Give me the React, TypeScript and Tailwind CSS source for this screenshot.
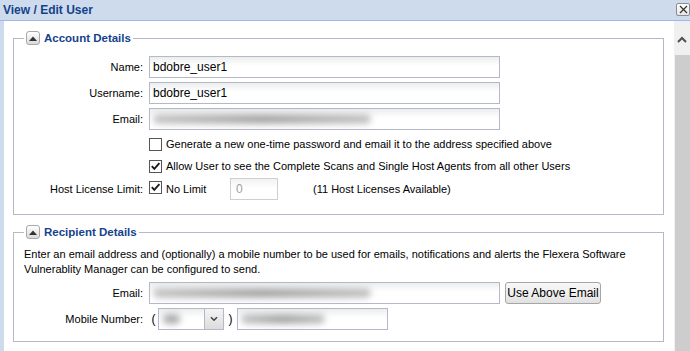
import React from "react";

const boxClass =
  "h-[22px] border border-[#b5b8c8] bg-linear-to-b from-[#eceeee] via-white via-[45%] to-white";

const Checkbox = ({ checked }: { checked?: boolean }) => (
  <span className="inline-flex items-center justify-center w-[13px] h-[13px] border border-[#555] bg-white shrink-0">
    {checked && (
      <svg width="11" height="11" viewBox="0 0 11 11">
        <path d="M1.8 5.2 L4.3 7.8 L9.4 2.2" fill="none" stroke="#1b1b1b" strokeWidth="1.9" />
      </svg>
    )}
  </span>
);

const Legend = ({ title }: { title: string }) => (
  <legend className="px-[2px]">
    <span className="flex items-center gap-[4px]">
      <span className="w-[14px] h-[14px] rounded-[3px] border border-[#a9a9a9] bg-linear-to-b from-white to-[#dadada] flex items-center justify-center">
        <svg width="8" height="5" viewBox="0 0 8 5">
          <path d="M0 5 L4 0.5 L8 5 Z" fill="#333" />
        </svg>
      </span>
      <span className="text-[11.5px] leading-[14px] font-bold text-[#15428b]">{title}</span>
    </span>
  </legend>
);

const Blur = ({ width }: { width: string }) => (
  <span className={`block h-[10px] rounded-full bg-linear-to-r from-[#c6c6c6] via-[#a8a8a8] to-[#c4c4c4] blur-[3px] ${width}`} />
);

const FieldLabel = ({ text }: { text: string }) => (
  <span className="w-[119px] shrink-0 text-right">{text}</span>
);

const App = () => {
  return (
    <div className="w-[690px] h-[351px] overflow-hidden flex flex-col bg-[#cedbec] font-['Liberation_Sans',Arial,sans-serif] text-[11px] text-black">
      <div className="h-[21px] shrink-0 flex justify-between border-b border-[#99bbe8] pl-[3px]">
        <span className="text-[12px] leading-[20px] font-bold text-[#15428b]">View / Edit User</span>
        <span className="mt-[3px] w-[14px] h-[13px] rounded-[2px] border border-[#8c8c8c] bg-linear-to-b from-white to-[#e6e6e6] flex items-center justify-center">
          <svg width="9" height="9" viewBox="0 0 9 9">
            <path d="M1 1 L8 8 M8 1 L1 8" stroke="#333" strokeWidth="1.2" />
          </svg>
        </span>
      </div>

      <div className="flex flex-1 min-h-0 pl-[4px]">
        <div className="flex-1 bg-white pl-[9px] pr-[10px]">
          <fieldset className="mt-[10px] border border-[#b5b8c8] px-[10px] pt-[11px] pb-[14px]">
            <Legend title="Account Details" />
            <div className="flex items-center">
              <FieldLabel text="Name:" />
              <input
                className={`${boxClass} ml-[6px] w-[351px] pl-[3px] text-[12px] outline-none`}
                defaultValue="bdobre_user1"
              />
            </div>
            <div className="flex items-center mt-[4px]">
              <FieldLabel text="Username:" />
              <input
                className={`${boxClass} ml-[6px] w-[351px] pl-[3px] text-[12px] outline-none`}
                defaultValue="bdobre_user1"
              />
            </div>
            <div className="flex items-center mt-[4px]">
              <FieldLabel text="Email:" />
              <div className={`${boxClass} ml-[6px] w-[351px] pl-[3px] flex items-center`}>
                <Blur width="w-[218px]" />
              </div>
            </div>
            <div className="flex items-center h-[22px] mt-[3px]">
              <span className="w-[125px] shrink-0" />
              <Checkbox />
              <span className="ml-[4px]">
                Generate a new one-time password and email it to the address specified above
              </span>
            </div>
            <div className="flex items-center h-[23px]">
              <span className="w-[125px] shrink-0" />
              <Checkbox checked />
              <span className="ml-[4px]">
                Allow User to see the Complete Scans and Single Host Agents from all other Users
              </span>
            </div>
            <div className="flex items-center">
              <FieldLabel text="Host License Limit:" />
              <span className="ml-[6px]">
                <Checkbox checked />
              </span>
              <span className="ml-[4px] w-[64px]">No Limit</span>
              <div className="w-[48px] h-[22px] border border-[#cfcfcf] bg-linear-to-b from-[#f2f2f2] to-white to-[45%] pl-[5px] flex items-center text-[#a0a0a0] text-[12px]">
                0
              </div>
              <span className="ml-[35px]">(11 Host Licenses Available)</span>
            </div>
          </fieldset>

          <fieldset className="mt-[10px] border border-[#b5b8c8] px-[10px] pt-[8px] pb-[11px]">
            <Legend title="Recipient Details" />
            <p className="leading-[15px]">
              Enter an email address and (optionally) a mobile number to be used for emails, notifications and alerts the Flexera Software Vulnerablity Manager can be configured to send.
            </p>
            <div className="flex items-center mt-[5px]">
              <FieldLabel text="Email:" />
              <div className={`${boxClass} ml-[6px] w-[351px] pl-[3px] flex items-center`}>
                <Blur width="w-[218px]" />
              </div>
              <button className="ml-[5px] w-[96px] h-[22px] rounded-[3px] border border-[#a6a6a6] bg-linear-to-b from-[#f7f7f7] via-[#f0f0f0] via-[50%] to-[#e0e0e0] text-[12px] text-black font-['Liberation_Sans',Arial,sans-serif]">
                Use Above Email
              </button>
            </div>
            <div className="flex items-center mt-[4px]">
              <FieldLabel text="Mobile Number:" />
              <span className="ml-[6px] w-[9px] text-[12px] text-center">(</span>
              <div className="w-[66px] h-[22px] border border-[#b5b8c8] flex">
                <div className="flex-1 flex items-center pl-[3px] bg-linear-to-b from-[#eceeee] to-white to-[45%]">
                  <Blur width="w-[19px]" />
                </div>
                <div className="w-[19px] border-l border-[#b5b8c8] bg-linear-to-b from-[#f4f4f4] to-[#dcdcdc] flex items-center justify-center">
                  <svg width="8" height="6" viewBox="0 0 8 6">
                    <path d="M1 1.2 L4 4.2 L7 1.2" fill="none" stroke="#444" strokeWidth="1.6" />
                  </svg>
                </div>
              </div>
              <span className="w-[13px] text-[12px] text-center">)</span>
              <div className={`${boxClass} w-[151px] pl-[3px] flex items-center`}>
                <Blur width="w-[84px]" />
              </div>
            </div>
          </fieldset>
        </div>

        <div className="w-[16px] bg-[#f0f0f0] flex flex-col">
          <div className="h-[34px] shrink-0 flex justify-center pt-[15px]">
            <svg width="10" height="7" viewBox="0 0 10 7">
              <path d="M1 6 L5 2 L9 6" fill="none" stroke="#505050" strokeWidth="2" />
            </svg>
          </div>
          <div className="flex-1 ml-[1px] bg-[#cdcdcd]" />
        </div>
      </div>
    </div>
  );
};

export default App;
